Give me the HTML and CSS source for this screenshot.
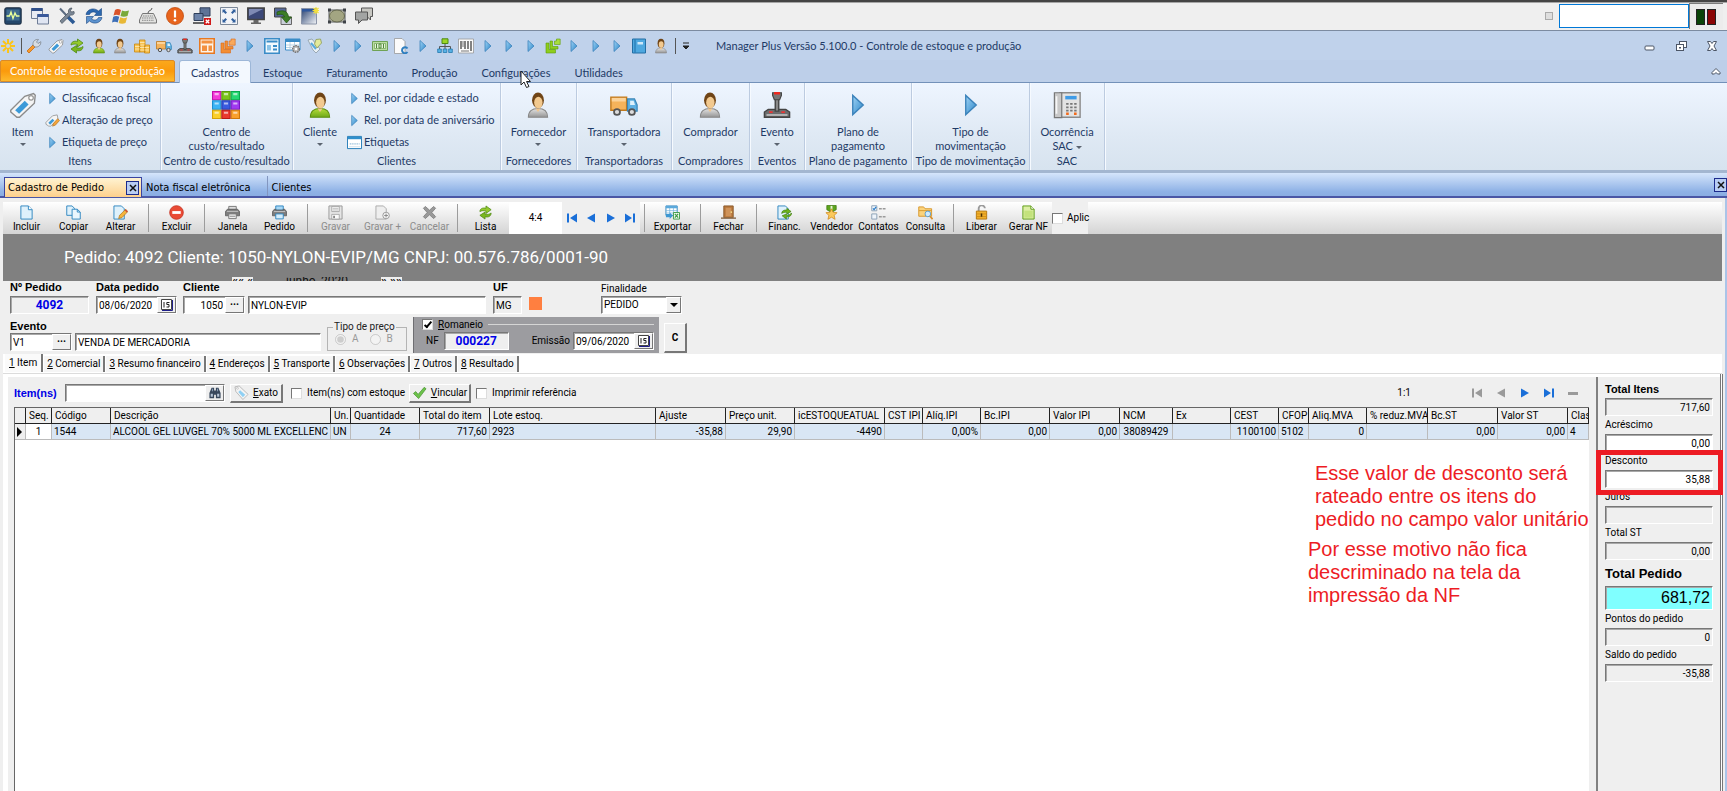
FILE: index.html
```
<!DOCTYPE html>
<html lang="pt-BR">
<head>
<meta charset="utf-8">
<title>Manager Plus - Controle de estoque e produção</title>
<link rel="stylesheet" href="styles.css">
</head>
<body>
<svg class="defs" aria-hidden="true">
  <defs>
    <linearGradient id="gBlue" x1="0" y1="0" x2="1" y2="1"><stop offset="0" stop-color="#9fd3f5"/><stop offset="1" stop-color="#2b86c8"/></linearGradient>
    <linearGradient id="gGray" x1="0" y1="0" x2="0" y2="1"><stop offset="0" stop-color="#e4e4e4"/><stop offset="1" stop-color="#949494"/></linearGradient>
    <linearGradient id="gGreen" x1="0" y1="0" x2="0" y2="1"><stop offset="0" stop-color="#b4dd3a"/><stop offset="1" stop-color="#6fa818"/></linearGradient>
    <linearGradient id="gScr" x1="0" y1="0" x2="1" y2="1"><stop offset="0" stop-color="#27406f"/><stop offset="1" stop-color="#f4f6f9"/></linearGradient>
  </defs>
  <symbol id="arrow" viewBox="0 0 16 16"><path d="M5 2.500V13.500L11 8Z" fill="url(#gBlue)" stroke="#3c83bb" stroke-width=".8"/></symbol>
  <symbol id="tag" viewBox="0 0 16 16"><path d="M1 11 9 3 14 1.500 15 2.500 14.500 7 6 15 4.500 15 1 12Z" fill="#f5f5f5" stroke="#8b8b8b" stroke-width=".8"/><path d="M3.500 11 9 5.500 11.200 7.700 5.800 13Z" fill="#3d9ad8"/><circle cx="12.600" cy="3.900" r="1.300" fill="#fff" stroke="#999" stroke-width=".7"/></symbol>
  <symbol id="tagedit" viewBox="0 0 16 16"><path d="M1 10 8 3 13 2 14 7 6 14 4 14 1 12Z" fill="#f5f5f5" stroke="#8b8b8b" stroke-width=".8"/><path d="M3.500 10.500 8 6 10 8 5.500 12.500Z" fill="#3d9ad8"/><path d="M8 14 9 11 13.500 6 15.500 8 11 13Z" fill="#f3a43a" stroke="#a76b1a" stroke-width=".6"/></symbol>
  <symbol id="tags" viewBox="0 0 16 16"><path d="M1 2 5 1 13 11 9 15 6 12Z" fill="#e9f0f4" stroke="#8a9aa5" stroke-width=".8"/><path d="M4 5 9 11" stroke="#58a9de" stroke-width="2"/><path d="M9 1.500 13.500 1 14.500 5 10 10 7.500 6Z" fill="#e3ea9a" stroke="#8a9a55" stroke-width=".8"/></symbol>
  <symbol id="personG" viewBox="0 0 16 16"><path d="M2.500 15C2.500 11.500 4.500 10 8 10S13.500 11.500 13.500 15Z" fill="url(#gGreen)" stroke="#5e8f12" stroke-width=".6"/><path d="M6.500 10 8 12 9.500 10Z" fill="#f0c58e"/><ellipse cx="8" cy="5.300" rx="3.400" ry="4.500" fill="#6f4416"/><ellipse cx="8.200" cy="6.600" rx="2.400" ry="3.300" fill="#f2c98f"/></symbol>
  <symbol id="personA" viewBox="0 0 16 16"><path d="M2.500 15C2.500 11.500 4.500 10 8 10S13.500 11.500 13.500 15Z" fill="url(#gGray)" stroke="#888" stroke-width=".6"/><path d="M6.500 10 8 12 9.500 10Z" fill="#f0c58e"/><ellipse cx="8" cy="5.300" rx="3.400" ry="4.500" fill="#6f4416"/><ellipse cx="8.200" cy="6.600" rx="2.400" ry="3.300" fill="#f2c98f"/></symbol>
  <symbol id="truck" viewBox="0 0 16 16"><path d="M.5 3.500H9.500V11H.5Z" fill="#f5b35b" stroke="#c17a1d" stroke-width=".8"/><path d="M1 4H9V6H1Z" fill="#fbd39a"/><path d="M10 4.500H14L15.500 8V11.500H10Z" fill="#5eb0e2" stroke="#3a86b8" stroke-width=".7"/><path d="M11.500 5.500H13.500L14.300 8H11.500Z" fill="#dff1fb"/><circle cx="4" cy="12" r="1.700" fill="#ddd" stroke="#555"/><circle cx="12.500" cy="12" r="1.700" fill="#ddd" stroke="#555"/></symbol>
  <symbol id="joy" viewBox="0 0 16 16"><path d="M.8 15V12L3 10.500H13L15.200 12V15Z" fill="#6d6d6d" stroke="#444" stroke-width=".8"/><path d="M7 4H9V11.500H7Z" fill="#888" stroke="#444" stroke-width=".8"/><path d="M5.500 1H10.500V2.500L9.500 5H6.500L5.500 2.500Z" fill="#777" stroke="#444" stroke-width=".7"/><path d="M6.300.6H9.700V2H6.300Z" fill="#f0281e"/><path d="M3.500 11.500H5.500V12.500H3.500ZM10.500 11.500H12.500V12.500H10.500Z" fill="#e33"/><path d="M2 13.700H14" stroke="#bbb"/></symbol>
  <symbol id="grid9" viewBox="0 0 27 27"><g stroke-width="1"><path d="M.5.5H8.500V8.500H.5Z" fill="#f23ad9" stroke="#c111a8"/><path d="M9.500.5H17.500V8.500H9.500Z" fill="#7bc51a" stroke="#5a9a0c"/><path d="M18.500.5H26.500V8.500H18.500Z" fill="#26d873" stroke="#0aa94e"/><path d="M.5 9.500H8.500V17.500H.5Z" fill="#3cb4f6" stroke="#1b8fd0"/><path d="M9.500 9.500H17.500V17.500H9.500Z" fill="#3a5be0" stroke="#2038ad"/><path d="M18.500 9.500H26.500V17.500H18.500Z" fill="#a03af0" stroke="#7a15c5"/><path d="M.5 18.500H8.500V26.500H.5Z" fill="#fbd02a" stroke="#d4a30a"/><path d="M9.500 18.500H17.500V26.500H9.500Z" fill="#ea3a2e" stroke="#b81a12"/><path d="M18.500 18.500H26.500V26.500H18.500Z" fill="#faa02c" stroke="#d0780a"/></g><path d="M2.500 3H6.500M11.500 3H15.500M20.500 3H24.500M2.500 12H6.500M11.500 12H15.500M20.500 12H24.500M2.500 21H6.500M11.500 21H15.500M20.500 21H24.500" stroke="#fff" stroke-opacity=".6" stroke-width="2"/></symbol>
  <symbol id="label" viewBox="0 0 16 16"><path d="M.5 1.500H15.500V14.500H.5Z" fill="#fff" stroke="#1d79b5"/><path d="M1 2H15V4.500H1Z" fill="#2f8fcc"/><path d="M3 9.500H13.500" stroke="#4a90c0" stroke-dasharray="1 1"/><path d="M2 12.500H14" stroke="#cfe0ec"/></symbol>
  <symbol id="phone" viewBox="0 0 16 16"><path d="M4 1H15.500V15H4Z" fill="#e3e3e3" stroke="#8b8b8b" stroke-width=".8"/><path d="M.8 1H5V15.200H.8Z" fill="#c8c8c8" stroke="#777" stroke-width=".7"/><path d="M2 3V13" stroke="#f6f6f6"/><path d="M7 2.800H13.500V4.800H7Z" fill="#3f9be6"/><path d="M7.500 7.300H13.500M7.500 9.300H13.500M7.500 11.200H13.500" stroke="#777" stroke-width="1" stroke-dasharray="1.400 .9"/><path d="M7.500 13H9M12 13H13.500" stroke="#f26a1b" stroke-width="1.300"/></symbol>
  <symbol id="star" viewBox="0 0 16 16"><path d="M8 1V15M1 8H15M3 3 13 13M13 3 3 13" stroke="#fbc418" stroke-width="2"/><circle cx="8" cy="8" r="2" fill="#c3d4ec"/></symbol>
  <symbol id="wrench" viewBox="0 0 16 16"><path d="M1 13 7 7 9 9 3 15Z" fill="#f79a2c" stroke="#c86a10" stroke-width=".8"/><path d="M7 7C6.500 3.500 9 1 12.500 1.500L10.500 4 12 5.500 14.800 3.700C15.200 7 12.500 9.500 9 9Z" fill="#d7dce2" stroke="#7c858f" stroke-width=".8"/></symbol>
  <symbol id="recycle" viewBox="0 0 16 16"><path d="M2 7C2 4 5 2.500 8.500 3.500V1L14 5 8.500 9V6.500C6 5.700 4 6 2 7Z" fill="#94c92d" stroke="#4f8a12" stroke-width=".8"/><path d="M14 8.500C14 12 11 13.500 7.500 12.500V15L2 11 7.500 7.500V9.700C10 10.500 12 10 14 8.500Z" fill="#7ab71e" stroke="#4f8a12" stroke-width=".8"/></symbol>
  <symbol id="coins" viewBox="0 0 16 16"><path d="M.5 6H6V14H.5ZM5.500 2H11V14H5.500ZM10.500 7H15.500V15H10.500Z" fill="#f9c34f" stroke="#c8860f" stroke-width=".8"/><path d="M1 8.500H5.500M1 11H5.500M6 4.500H10.500M6 7H10.500M6 9.500H10.500M6 12H10.500M11 9.500H15M11 12H15" stroke="#fbe7b2" stroke-width=".9"/></symbol>
  <symbol id="winO" viewBox="0 0 16 16"><path d="M.8.800H15.200V15.200H.8Z" fill="#fdf3e7" stroke="#e87820" stroke-width="1.600"/><path d="M2.500 2.500H13.500V5.500H2.500ZM3 7.500H8V13H3ZM9.500 7.500H13V13H9.500Z" fill="#f39140"/></symbol>
  <symbol id="winB" viewBox="0 0 16 16"><path d="M.8.800H15.200V15.200H.8Z" fill="#f3f9fd" stroke="#3a8cc7" stroke-width="1.600"/><path d="M2.500 2.500H13.500V4.500H2.500Z" fill="#3a8cc7"/><path d="M3 7H7V12.500H3Z" fill="#8cc4e8"/><path d="M9 7H13V9H9ZM9 10.500H13V12.500H9Z" fill="#3a8cc7"/></symbol>
  <symbol id="layO" viewBox="0 0 16 16"><path d="M1 5H4V11.500H10.500V15H1Z" fill="#f38e34" stroke="#d7691a" stroke-width=".6"/><path d="M5 3H7.500V8.500H13V11H5Z" fill="#f38e34" stroke="#d7691a" stroke-width=".6"/><path d="M9 3H11V1H15.200V7.200H9Z" fill="#f9a95c" stroke="#d7691a" stroke-width=".6"/></symbol>
  <symbol id="layG" viewBox="0 0 16 16"><path d="M1 5H4V11.500H10.500V15H1Z" fill="#8fce1c" stroke="#5d9a0a" stroke-width=".6"/><path d="M5 3H7.500V8.500H13V11H5Z" fill="#8fce1c" stroke="#5d9a0a" stroke-width=".6"/><path d="M9.500 3H11.500V1H15.200V6.500H9.500Z" fill="#a8dd3c" stroke="#5d9a0a" stroke-width=".6"/></symbol>
  <symbol id="tgear" viewBox="0 0 16 16"><path d="M.5 1H15V12H.5Z" fill="#fff" stroke="#3a8cc7"/><path d="M.5 1H15V4H.5Z" fill="#3a8cc7"/><path d="M1 7H14M1 9.500H14M5 4V12M9.500 4V12" stroke="#a7c9e0" stroke-width=".8"/><circle cx="11" cy="11" r="3.300" fill="#bbb" stroke="#777" stroke-width="1.500" stroke-dasharray="1.600 .8"/><circle cx="11" cy="11" r="1.200" fill="#fff"/></symbol>
  <symbol id="money" viewBox="0 0 16 16"><path d="M.5 3.500H15.500V12.500H.5Z" fill="#b9dca0" stroke="#6fa255"/><path d="M2.500 5.500H13.500V10.500H2.500Z" fill="#e5f3d9" stroke="#6fa255" stroke-width=".7"/><path d="M4.500 6V10M7 6V10H9V6ZM11.500 6V10" fill="none" stroke="#4d8a35"/></symbol>
  <symbol id="docC" viewBox="0 0 16 16"><path d="M1.500.5H9L12 3.500V15.500H1.500Z" fill="#fbfbfb" stroke="#999" stroke-width=".8"/><path d="M14.500 10.500A3 3 0 1 0 14.500 14" fill="none" stroke="#2f7fc0" stroke-width="2"/></symbol>
  <symbol id="net" viewBox="0 0 16 16"><path d="M5 .8H11V5.500H5Z" fill="#9bd526" stroke="#4d8a10"/><path d="M8 6V9M2.500 11V8.500H13.500V11M8 8V11" stroke="#555" fill="none"/><path d="M.7 11H4.300V14.500H.7ZM6.200 11H9.800V14.500H6.200ZM11.700 11H15.300V14.500H11.700Z" fill="#58b2e6" stroke="#2378ad" stroke-width=".8"/></symbol>
  <symbol id="bar" viewBox="0 0 16 16"><path d="M.5 1H15.500V15H.5Z" fill="#fbfbfb" stroke="#999" stroke-width=".8"/><path d="M3 3V11M7 3V11M10 3V11M13 3V13" stroke="#333" stroke-width="1.200"/><path d="M5 3V9M3 13H11" stroke="#555" stroke-width=".8"/></symbol>
  <symbol id="book" viewBox="0 0 16 16"><path d="M1.500 1H14.500V15H1.500Z" fill="#4ea8df" stroke="#236fa5"/><path d="M4 1V15" stroke="#2b7fb8" stroke-width="1.400"/><path d="M6.500 4H12V6.500H6.500Z" fill="#cfe8f8"/></symbol>

  <symbol id="s1" viewBox="0 0 18 18"><rect x=".8" y=".8" width="16.400" height="16.400" rx="1.500" fill="#24476b" stroke="#1b2a3d"/><rect x="2.500" y="2.500" width="13" height="11" fill="#3f6c8f"/><path d="M2.500 9H5.500L7 5 9 11.500 11 6 12.500 9H15.500" fill="none" stroke="#eaff9a" stroke-width="1.300"/></symbol>
  <symbol id="s2" viewBox="0 0 18 18"><path d="M.5 1.500H11.500V11.500H.5Z" fill="#e8ebf2" stroke="#6f7d96"/><path d="M.5 1H11.500V4H.5Z" fill="#2f4f8a"/><path d="M6.500 7.500H17.500V17H6.500Z" fill="#dfe5f2" stroke="#6f7d96"/><path d="M6.500 7H17.500V10H6.500Z" fill="#39599a"/></symbol>
  <symbol id="s3" viewBox="0 0 18 18"><path d="M2 1.500 9 9" stroke="#5b6b80" stroke-width="2"/><path d="M9 9 16 16" stroke="#2c5a94" stroke-width="3.500"/><path d="M16 4.500 13.500 5 12.500 3.500 14 1C11 1 10 3 10.500 5.500L2 14 4 16.500 12.500 8C15 8.500 17 7 16 4.500Z" fill="#7b8795" stroke="#46505c" stroke-width=".7"/></symbol>
  <symbol id="s4" viewBox="0 0 18 18"><path d="M1 7.500C2 2 9 0 13.500 4L16.500 1.500V8.500H9.500L11.500 6C8.500 4 5.500 5 4.500 7.500Z" fill="#2b67ae" stroke="#174580" stroke-width=".6"/><path d="M17 10.500C16 16 9 18 4.500 14L1.500 16.500V9.500H8.500L6.500 12C9.500 14 12.500 13 13.500 10.500Z" fill="#5d93cf" stroke="#174580" stroke-width=".6"/></symbol>
  <symbol id="s5" viewBox="0 0 18 18"><path d="M3 3C5 1.500 7 2 9 3L7.500 8.500C5.500 7.500 3.500 7.500 1.500 8.500Z" fill="#d9532a"/><path d="M10 3.500C12 4.500 14 4.500 17 3.500L15.500 9C13 10 10.500 10 8.500 9Z" fill="#79a93a"/><path d="M1.200 9.800C3.200 8.800 5.200 8.800 7.200 9.800L5.700 15.500C3.700 14.500 2 14.500 0 15.500Z" fill="#3d6fb8"/><path d="M8.200 10.300C10.200 11.300 12.500 11.500 15.200 10.300L13.500 16C11.500 17 8.800 17 6.700 16Z" fill="#e8b836"/></symbol>
  <symbol id="s6" viewBox="0 0 18 18"><path d="M9 6C9 3 13 4 13 1" fill="none" stroke="#555"/><path d="M3.500 6.500H14.500L17.500 13V16H.5V13Z" fill="#e2e2e0" stroke="#777"/><path d="M4 9H14M3 11H15M3 13.300H15" stroke="#888" stroke-dasharray="1.500 .8"/></symbol>
  <symbol id="s7" viewBox="0 0 18 18"><circle cx="9" cy="9" r="8.500" fill="#e8641c" stroke="#c14a0c" stroke-width=".8"/><path d="M9 3.500V10.500" stroke="#fff" stroke-width="2.200"/><circle cx="9" cy="13.200" r="1.300" fill="#fff"/></symbol>
  <symbol id="s8" viewBox="0 0 18 18"><path d="M7 .8H17V9H7Z" fill="#5d7397" stroke="#2f3f5a"/><path d="M1 6.500H10V13.500H1Z" fill="#6d84aa" stroke="#2f3f5a"/><path d="M0 16H11" stroke="#666" stroke-width="2"/><path d="M11 11H18V18H11Z" fill="#d01a1a"/><path d="M12.800 12.800 16.200 16.200M16.200 12.800 12.800 16.200" stroke="#fff" stroke-width="1.400"/></symbol>
  <symbol id="s9" viewBox="0 0 18 18"><path d="M.5.500H17.500V17.500H.5Z" fill="#f1f3f7" stroke="#7b8797"/><path d="M2.500 2.500H6L5 3.500 7 5.500 5.500 7 3.500 5 2.500 6ZM15.500 2.500V6L14.500 5 12.500 7 11 5.500 13 3.500 12 2.500ZM2.500 15.500V12L3.500 13 5.500 11 7 12.500 5 14.500 6 15.500ZM15.500 15.500H12L13 14.500 11 12.500 12.500 11 14.500 13 15.500 12Z" fill="#33619e"/></symbol>
  <symbol id="s10" viewBox="0 0 18 18"><path d="M.8 1H17.200V12.500H.8Z" fill="#3c4878" stroke="#444" stroke-width="1.500"/><path d="M2 2H16L2 9Z" fill="#7f8ab4"/><path d="M6.500 13H11.500V15.500H14V17H4V15.500H6.500Z" fill="#666"/></symbol>
  <symbol id="s11" viewBox="0 0 18 18"><path d="M.5 1H12V10H.5Z" fill="#56699a" stroke="#444"/><path d="M7 10H17.500V17.500H7Z" fill="#c9ced9" stroke="#666"/><path d="M3 5C9 2.500 14 4 14.500 10H17.500L12.500 16 7.500 10H10.500C10 7.500 7 6.500 3 8Z" fill="#3d7d26" stroke="#225310" stroke-width=".7"/></symbol>
  <symbol id="s12" viewBox="0 0 18 18"><path d="M.5 1.500H15.500V17H.5Z" fill="url(#gScr)" stroke="#8a94a8"/><path d="M1 2H15V4.500H1Z" fill="#2d569c"/><path d="M15 0V7M11.500 3.500H18M12.500 1 17.500 6M17.500 1 12.500 6" stroke="#f4e03a" stroke-width="1.200"/></symbol>
  <symbol id="s13" viewBox="0 0 18 18"><path d="M1 3H17V15H1Z" fill="#cdcdbd" stroke="#55585c"/><ellipse cx="9" cy="9" rx="7.500" ry="6" fill="#a3a582" stroke="#55583f" stroke-width=".8"/><path d="M0 1.500H3V4.500H0ZM15 1.500H18V4.500H15ZM0 13.500H3V16.500H0ZM15 13.500H18V16.500H15Z" fill="#3f4348"/></symbol>
  <symbol id="s14" viewBox="0 0 18 18"><path d="M6.500 1H17.500V9.500H15.500V13L12 9.500H6.500Z" fill="#c7c7c2" stroke="#555"/><path d="M.5 5H12.500V13H7L3.500 16.500V13H.5Z" fill="#a2a4a3" stroke="#555"/></symbol>

  <symbol id="doc" viewBox="0 0 16 16"><path d="M2 1H10L14 5V15H2Z" fill="#dff1fb" stroke="#2f86c0"/><path d="M10 1V5H14" fill="#fff" stroke="#2f86c0"/></symbol>
  <symbol id="docs" viewBox="0 0 16 16"><path d="M.8 1H6.500L9 3.500V11H.8Z" fill="#dff1fb" stroke="#2f86c0"/><path d="M6.500 4.500H12L15.200 7.500V15H6.500Z" fill="#eaf6fd" stroke="#2f86c0"/><path d="M12 4.500V7.500H15" fill="none" stroke="#2f86c0"/></symbol>
  <symbol id="docedit" viewBox="0 0 16 16"><path d="M1 1H9L12 4V15H1Z" fill="#dff1fb" stroke="#2f86c0"/><path d="M6 14.500 7 11 13.500 4.500 15.800 7 9.500 13.500Z" fill="#f6b43c" stroke="#a8701a" stroke-width=".7"/><path d="M13.500 4.500 15.800 7 14.700 8 12.500 5.500Z" fill="#d04a3a"/></symbol>
  <symbol id="no" viewBox="0 0 16 16"><circle cx="8" cy="8" r="7.300" fill="#e94b35" stroke="#c22a1a" stroke-width=".8"/><path d="M3.500 6.500H12.500V9.500H3.500Z" fill="#fff"/></symbol>
  <symbol id="print" viewBox="0 0 16 16"><path d="M4 1.500H12V5H4Z" fill="#ddd" stroke="#777"/><path d="M2.500 4.500H13.500L15.500 7V11.500H.5V7Z" fill="#7d7d7d" stroke="#555" stroke-width=".8"/><path d="M2 6.800H14" stroke="#c5c5c5"/><path d="M4 9.500H12V14.500H4Z" fill="#eee" stroke="#777"/><path d="M5 12H11" stroke="#888"/></symbol>
  <symbol id="printB" viewBox="0 0 16 16"><path d="M4 1H12V5.500H4Z" fill="#a8d8f6" stroke="#2f86c0"/><path d="M2.500 4.500H4V5.500H12V4.500H13.500L15.500 7V11.500H.5V7Z" fill="#7d7d7d" stroke="#555" stroke-width=".8"/><path d="M2 7H14" stroke="#c5c5c5"/><path d="M4 9.500H12V14.800H4Z" fill="#d5edfb" stroke="#2f86c0"/></symbol>
  <symbol id="floppy" viewBox="0 0 16 16"><path d="M1 1H15V15H1Z" fill="#e5e5e5" stroke="#999"/><path d="M4 1.500H12V7H4ZM4 10H12V15H4Z" fill="#fafafa" stroke="#999" stroke-width=".8"/><path d="M5 3.500H11M5 5.300H11" stroke="#aaa" stroke-width=".8"/><path d="M5.500 11.500H7.500V14H5.500Z" fill="#888"/></symbol>
  <symbol id="docplus" viewBox="0 0 16 16"><path d="M1 1H9L12 4V15H1Z" fill="#eee" stroke="#aaa"/><circle cx="11.800" cy="11.200" r="3.500" fill="#f4f4f4" stroke="#999"/><path d="M11.800 9.200V13.200M9.800 11.200H13.800" stroke="#888"/></symbol>
  <symbol id="x" viewBox="0 0 16 16"><path d="M3.500 1.500 8 5.500 12.500 1.500 14.500 3.500 10.500 8 14.500 12.500 12.500 14.500 8 10.500 3.500 14.500 1.500 12.500 5.500 8 1.500 3.500Z" fill="#999" stroke="#777" stroke-width=".8"/></symbol>
  <symbol id="nfirst" viewBox="0 0 12 12"><path d="M1 1.500H3V10.500H1ZM11 1.500V10.500L4 6Z"/></symbol>
  <symbol id="nprev" viewBox="0 0 12 12"><path d="M10 1.500V10.500L2 6Z"/></symbol>
  <symbol id="nnext" viewBox="0 0 12 12"><path d="M2 1.500V10.500L10 6Z"/></symbol>
  <symbol id="nlast" viewBox="0 0 12 12"><path d="M1 1.500V10.500L8 6ZM9 1.500H11V10.500H9Z"/></symbol>
  <symbol id="export" viewBox="0 0 16 16"><path d="M1 1H13V11H1Z" fill="#fff" stroke="#2f86c0"/><path d="M1 1H13V3.500H1Z" fill="#5aa9dc"/><path d="M1 6H13M1 8.500H13M5 3V11M9 3V11" stroke="#79b6dd" stroke-width=".8"/><path d="M1 9.500H5V8L8.500 11.500 5 15V13H1Z" fill="#3d97d2"/><path d="M9 8H15.500V15H9Z" fill="#f2faef" stroke="#3c9a44"/><path d="M10.500 9.500 14 13.500M14 9.500 10.500 13.500" stroke="#3c9a44" stroke-width="1.300"/></symbol>
  <symbol id="door" viewBox="0 0 16 16"><path d="M3 1H13V13.500H3Z" fill="#b9783c" stroke="#8a5a2c"/><path d="M5 3H11V12H5Z" fill="#cf935a"/><circle cx="11" cy="7.500" r=".9" fill="#f8e08a"/><path d="M0 14H16" stroke="#8a6a4c" stroke-width="1.500"/></symbol>
  <symbol id="docrec" viewBox="0 0 16 16"><path d="M1 1H9L12 4V15H1Z" fill="#dff1fb" stroke="#2f86c0"/><path d="M5 9C5 6 8 5 10.500 5.500V3.500L15 7 10.500 9.500V8C8.500 7.500 6.500 8 5 9ZM15.500 8.500C15.500 12 12.500 13 10 12.500V15L5.500 11.500 10 9.500V10.800C12 11 14 10.500 15.500 8.500Z" fill="#6db51c" stroke="#3c7a0c" stroke-width=".7"/></symbol>
  <symbol id="medal" viewBox="0 0 16 16"><path d="M3 .5H13V5L8 8 3 5Z" fill="#5ea51e" stroke="#3f7a10" stroke-width=".8"/><path d="M7 1H9V5H7Z" fill="#e8f4d8"/><path d="M8 4 9.700 7.800 14 8.200 10.800 11 11.800 15.300 8 13 4.200 15.300 5.200 11 2 8.200 6.300 7.800Z" fill="#fbc95c" stroke="#d08a1c" stroke-width=".8"/></symbol>
  <symbol id="checks" viewBox="0 0 16 16"><path d="M.8.800H6.200V6.200H.8ZM.8 9.500H6.200V15H.8Z" fill="#eef4fa" stroke="#8aa0b5"/><path d="M2 3.500 3.300 5 5.500 2" fill="none" stroke="#2378c8" stroke-width="1.200"/><path d="M8.500 4H16M8.500 12.500H16" stroke="#9a9a9a" stroke-width="1.500" stroke-dasharray="3 1"/></symbol>
  <symbol id="fsearch" viewBox="0 0 16 16"><path d="M.8 2H6L7.500 4H14.500V12H.8Z" fill="#fbd37c" stroke="#d8982c"/><path d="M1 6H14.500" stroke="#d8982c"/><circle cx="10.500" cy="9.500" r="3" fill="#cfeafc" stroke="#5a9ccc"/><path d="M12.800 12 15.500 15" stroke="#d8902c" stroke-width="1.800"/></symbol>
  <symbol id="lock" viewBox="0 0 16 16"><path d="M5 7V4A3.300 3.300 0 0 1 11.600 3.500" fill="none" stroke="#9a9a9a" stroke-width="2"/><path d="M2.500 6.500H13.500V15H2.500Z" fill="#f0b02c" stroke="#b5760c"/><path d="M3 9.500H13M3 12.300H13" stroke="#d48f14"/><path d="M7.200 9H8.800V12.500H7.200Z" fill="#4c3206"/></symbol>
  <symbol id="docG" viewBox="0 0 16 16"><path d="M2 1H10.500L14 4.500V15H2Z" fill="#dcefa5" stroke="#5c9c12"/><path d="M3.500 6V13.500H12.500V6" fill="#c3e27c"/><path d="M10.500 1V4.500H14" fill="#fff" stroke="#5c9c12"/></symbol>
  <symbol id="bino" viewBox="0 0 14 14"><path d="M3 1H6V4H8V1H11L13.500 7V13H8V9H6V13H.5V7Z" fill="#37475c"/><path d="M2 8H4.500V11.500H2ZM9.500 8H12V11.500H9.500Z" fill="#b5c4d6"/><path d="M4 2V5M10 2V5" stroke="#9db0c8"/></symbol>
  <symbol id="tagL" viewBox="0 0 16 16"><path d="M1 2 5.500 1 15 10 9.500 15.500 2 7Z" fill="#f4f4f4" stroke="#aaa" stroke-width=".8"/><path d="M6.500 5.500 12 10.500 9.500 13 4.500 7.500Z" fill="#8fd0f4"/><circle cx="3.700" cy="3.500" r="1" fill="#fff" stroke="#aaa" stroke-width=".6"/></symbol>
  <symbol id="check" viewBox="0 0 16 16"><path d="M1.500 9 4 7 6.500 10 13 2.500 15 4 7 14.500Z" fill="#6cc24a" stroke="#3f8c28" stroke-width=".7"/></symbol>
  <symbol id="cal" viewBox="0 0 12 12"><path d="M.5.500H10.500V10.500H.5Z" fill="#fff" stroke="#444"/><path d="M11.500 1V11.500H1" fill="none" stroke="#20208a"/><path d="M3 3V8.500M8.500 3.500H5.800V5.500H8V8H5.500" fill="none" stroke="#222"/></symbol>
</svg>

<header class="strip">
  <div class="strip-icons">
    <svg><use href="#s1"/></svg><svg><use href="#s2"/></svg><svg><use href="#s3"/></svg><svg><use href="#s4"/></svg><svg><use href="#s5"/></svg><svg><use href="#s6"/></svg><svg><use href="#s7"/></svg><svg><use href="#s8"/></svg><svg><use href="#s9"/></svg><svg><use href="#s10"/></svg><svg><use href="#s11"/></svg><svg><use href="#s12"/></svg><svg><use href="#s13"/></svg><svg><use href="#s14"/></svg>
  </div>
  <input class="strip-check" type="checkbox" aria-label="Fixar" disabled>
  <input class="strip-input" type="text" aria-label="Sessão">
  <div class="leds"><span class="led green"></span><span class="led red"></span></div>
</header>

<div class="quick">
  <svg class="q"><use href="#star"/></svg>
  <span class="vline"></span>
  <div class="quick-icons">
    <svg><use href="#wrench"/></svg><svg><use href="#tag"/></svg><svg><use href="#recycle"/></svg><svg><use href="#personG"/></svg><svg><use href="#personA"/></svg><svg><use href="#coins"/></svg><svg><use href="#truck"/></svg><svg><use href="#joy"/></svg><svg><use href="#winO"/></svg><svg><use href="#layO"/></svg><svg><use href="#arrow"/></svg><svg><use href="#winB"/></svg><svg><use href="#tgear"/></svg><svg><use href="#tags"/></svg><svg><use href="#arrow"/></svg><svg><use href="#arrow"/></svg><svg><use href="#money"/></svg><svg><use href="#docC"/></svg><svg><use href="#arrow"/></svg><svg><use href="#net"/></svg><svg><use href="#bar"/></svg><svg><use href="#arrow"/></svg><svg><use href="#arrow"/></svg><svg><use href="#arrow"/></svg><svg><use href="#layG"/></svg><svg><use href="#arrow"/></svg><svg><use href="#arrow"/></svg><svg><use href="#arrow"/></svg><svg><use href="#book"/></svg><svg><use href="#personA"/></svg>
  </div>
  <span class="vline end"></span>
  <svg class="q-more" viewBox="0 0 8 8"><path d="M1 1H7M1 4H7L4 7Z" stroke="#222" fill="#222"/></svg>
  <div class="app-title">Manager Plus Versão 5.100.0 - Controle de estoque e produção</div>
  <div class="win-controls">
    <button aria-label="Minimizar"><svg viewBox="0 0 12 12"><rect x="1" y="6" width="9" height="4" rx="1" fill="#fff" stroke="#4c5666"/></svg></button>
    <button aria-label="Restaurar"><svg viewBox="0 0 12 12"><rect x="4.500" y="1.500" width="7" height="6" fill="#fff" stroke="#4c5666"/><rect x="1.500" y="4.500" width="7" height="6" fill="#fff" stroke="#4c5666"/><rect x="4" y="7" width="2" height="1.500" fill="#4c5666"/></svg></button>
    <button aria-label="Fechar"><svg viewBox="0 0 12 12"><path d="M1.500 1.500H4.500L6 3.500 7.500 1.500H10.500L8 6 10.500 10.500H7.500L6 8.500 4.500 10.500H1.500L4 6Z" fill="#fff" stroke="#4c5666"/></svg></button>
  </div>
</div>

<nav class="ribbon-tabs">
  <button class="app-tab">Controle de estoque e produção</button>
  <button class="rtab active">Cadastros</button><button class="rtab">Estoque</button><button class="rtab">Faturamento</button><button class="rtab">Produção</button><button class="rtab">Configurações</button><button class="rtab">Utilidades</button>
  <button class="collapse" aria-label="Recolher"><svg viewBox="0 0 10 8"><path d="M1 5.500 5 1.500 9 5.500V7H6.500L5 5.500 3.500 7H1Z" fill="#fff" stroke="#4c5666"/></svg></button>
  <svg class="cursor" viewBox="0 0 12 19"><path d="M1 1V15L4 12 6.500 17.500 9 16.500 6.500 11.500H10.500Z" fill="#fff" stroke="#222"/></svg>
</nav>

<section class="ribbon">
  <div class="group g1">
    <div class="gbody">
      <button class="big narrow"><svg><use href="#tag"/></svg><span>Item</span><i class="dd"></i></button>
      <div class="smalls">
        <button><svg><use href="#arrow"/></svg>Classificacao fiscal</button>
        <button><svg><use href="#tagedit"/></svg>Alteração de preço</button>
        <button><svg><use href="#arrow"/></svg>Etiqueta de preço</button>
      </div>
    </div>
    <div class="cap">Itens</div>
  </div>
  <div class="group g2"><div class="gbody"><button class="big"><svg><use href="#grid9"/></svg><span>Centro de<br>custo/resultado</span></button></div><div class="cap">Centro de custo/resultado</div></div>
  <div class="group g3">
    <div class="gbody">
      <button class="big mid"><svg><use href="#personG"/></svg><span>Cliente</span><i class="dd"></i></button>
      <div class="smalls">
        <button><svg><use href="#arrow"/></svg>Rel. por cidade e estado</button>
        <button><svg><use href="#arrow"/></svg>Rel. por data de aniversário</button>
        <button><svg><use href="#label"/></svg>Etiquetas</button>
      </div>
    </div>
    <div class="cap">Clientes</div>
  </div>
  <div class="group g4"><div class="gbody"><button class="big"><svg><use href="#personA"/></svg><span>Fornecedor</span><i class="dd"></i></button></div><div class="cap">Fornecedores</div></div>
  <div class="group g5"><div class="gbody"><button class="big"><svg><use href="#truck"/></svg><span>Transportadora</span><i class="dd"></i></button></div><div class="cap">Transportadoras</div></div>
  <div class="group g6"><div class="gbody"><button class="big"><svg><use href="#personA"/></svg><span>Comprador</span></button></div><div class="cap">Compradores</div></div>
  <div class="group g7"><div class="gbody"><button class="big"><svg><use href="#joy"/></svg><span>Evento</span><i class="dd"></i></button></div><div class="cap">Eventos</div></div>
  <div class="group g8"><div class="gbody"><button class="big"><svg><use href="#arrow"/></svg><span>Plano de<br>pagamento</span></button></div><div class="cap">Plano de pagamento</div></div>
  <div class="group g9"><div class="gbody"><button class="big"><svg><use href="#arrow"/></svg><span>Tipo de<br>movimentação</span></button></div><div class="cap">Tipo de movimentação</div></div>
  <div class="group g10"><div class="gbody"><button class="big"><svg><use href="#phone"/></svg><span>Ocorrência<br>SAC <i class="dd in"></i></span></button></div><div class="cap">SAC</div></div>
</section>

<nav class="doc-tabs">
  <div class="dtab active"><span>Cadastro de Pedido</span><button class="xbtn" aria-label="Fechar aba"><svg viewBox="0 0 8 8"><path d="M1 1 7 7M7 1 1 7" stroke="#111" stroke-width="1.500"/></svg></button></div>
  <button class="dtab nf">Nota fiscal eletrônica</button>
  <button class="dtab">Clientes</button>
  <button class="xbtn last" aria-label="Fechar"><svg viewBox="0 0 8 8"><path d="M1 1 7 7M7 1 1 7" stroke="#111" stroke-width="1.500"/></svg></button>
</nav>

<main class="window">
  <div class="toolbar">
    <button><svg><use href="#doc"/></svg>Incluir</button><button><svg><use href="#docs"/></svg>Copiar</button><button><svg><use href="#docedit"/></svg>Alterar</button><span class="sep"></span>
    <button><svg><use href="#no"/></svg>Excluir</button><span class="sep"></span>
    <button><svg><use href="#print"/></svg>Janela</button><button><svg><use href="#printB"/></svg>Pedido</button><span class="sep"></span>
    <button disabled><svg><use href="#floppy"/></svg>Gravar</button><button disabled><svg><use href="#docplus"/></svg>Gravar +</button><button disabled><svg><use href="#x"/></svg>Cancelar</button><span class="sep"></span>
    <button><svg><use href="#recycle"/></svg>Lista</button>
    <div class="counter">4:4</div>
    <div class="navs">
      <a href="#" aria-label="Primeiro"><svg><use href="#nfirst"/></svg></a><a href="#" aria-label="Anterior"><svg><use href="#nprev"/></svg></a><a href="#" aria-label="Próximo"><svg><use href="#nnext"/></svg></a><a href="#" aria-label="Último"><svg><use href="#nlast"/></svg></a>
    </div>
    <span class="sep"></span><button><svg><use href="#export"/></svg>Exportar</button><span class="sep"></span>
    <button><svg><use href="#door"/></svg>Fechar</button><span class="sep"></span>
    <button><svg><use href="#docrec"/></svg>Financ.</button><button><svg><use href="#medal"/></svg>Vendedor</button><button><svg><use href="#checks"/></svg>Contatos</button><button><svg><use href="#fsearch"/></svg>Consulta</button><span class="sep"></span>
    <button><svg><use href="#lock"/></svg>Liberar</button><button><svg><use href="#docG"/></svg>Gerar NF</button>
    <label class="aplic"><input type="checkbox" class="cb"><span>Aplic</span></label>
  </div>

  <h1 class="banner">Pedido: 4092 Cliente: 1050-NYLON-EVIP/MG CNPJ: 00.576.786/0001-90
    <span class="month"><b>«« «</b><span>junho, 2020</span><b>» »»</b></span>
  </h1>

  <form class="form">
    <div class="row one">
      <div class="field w-ped"><label for="ped">Nº Pedido</label><input id="ped" class="ro blue" value="4092" readonly></div>
      <div class="field w-date"><label for="dt">Data pedido</label><div class="combo"><input id="dt" value="08/06/2020"><button type="button" aria-label="Calendário"><svg><use href="#cal"/></svg></button></div></div>
      <div class="field w-cli"><label for="cli">Cliente</label><div class="combo"><input id="cli" class="r" value="1050"><button type="button">···</button></div></div>
      <div class="field w-name"><input id="cname" aria-label="Nome do cliente" value="NYLON-EVIP"></div>
      <div class="field w-uf"><label for="uf">UF</label><input id="uf" class="ro" value="MG" readonly></div>
      <span class="swatch"></span>
      <div class="field w-fin"><label for="fin" class="plain">Finalidade</label><div class="selwrap"><select id="fin"><option>PEDIDO</option></select><span class="selbtn"><i></i></span></div></div>
    </div>
    <div class="row two">
      <div class="field w-ev"><label for="ev">Evento</label><div class="combo"><input id="ev" value="V1"><button type="button">···</button></div></div>
      <div class="field w-evn"><input id="evn" aria-label="Nome do evento" value="VENDA DE MERCADORIA"></div>
      <fieldset class="tipo"><legend>Tipo de preço</legend><div class="opts"><label><input type="radio" name="tp" checked disabled>A</label><label><input type="radio" name="tp" disabled>B</label></div></fieldset>
      <div class="romaneio">
        <label class="rom-head"><input type="checkbox" class="cb" checked><span><u>R</u>omaneio</span><i></i></label>
        <div class="rom-body">
          <label for="nf">NF</label><input id="nf" class="ro blue nf-in" value="000227" readonly>
          <label for="em" class="em">Emissão</label><div class="combo em-in"><input id="em" value="09/06/2020"><button type="button" aria-label="Calendário"><svg><use href="#cal"/></svg></button></div>
        </div>
      </div>
      <button type="button" class="cbtn">C</button>
    </div>
  </form>

  <nav class="tabs">
    <button class="on"><u>1</u> Item</button><button><u>2</u> Comercial</button><button><u>3</u> Resumo financeiro</button><button><u>4</u> Endereços</button><button><u>5</u> Transporte</button><button><u>6</u> Observações</button><button><u>7</u> Outros</button><button><u>8</u> Resultado</button>
  </nav>

  <div class="content">
    <section class="items">
      <div class="item-bar">
        <label for="it" class="it-label">Item(ns)</label>
        <div class="combo it-in"><input id="it"><button aria-label="Localizar"><svg><use href="#bino"/></svg></button></div>
        <button class="raised exato"><svg><use href="#tagL"/></svg><span><u>E</u>xato</span></button>
        <label class="ck estoque"><input type="checkbox" class="cb">Item(ns) com estoque</label>
        <button class="raised vinc"><svg><use href="#check"/></svg><span><u>V</u>incular</span></button>
        <label class="ck"><input type="checkbox" class="cb">Imprimir referência</label>
        <div class="pager"><span>1:1</span>
          <a class="off first" href="#" aria-label="Primeiro"><svg><use href="#nfirst"/></svg></a><a class="off" href="#" aria-label="Anterior"><svg><use href="#nprev"/></svg></a><a href="#" aria-label="Próximo"><svg><use href="#nnext"/></svg></a><a href="#" aria-label="Último"><svg><use href="#nlast"/></svg></a><a class="off" href="#" aria-label="Remover"><svg viewBox="0 0 12 12"><path d="M1 5H11V8H1Z"/></svg></a>
        </div>
      </div>
      <div class="grid">
        <table>
          <colgroup><col class="c11"><col class="c26"><col class="c59"><col class="c220"><col class="c20"><col class="c69"><col class="c70"><col class="c166"><col class="c70"><col class="c69"><col class="c90"><col class="c38"><col class="c58"><col class="c69"><col class="c70"><col class="c53"><col class="c58"><col class="c48"><col class="c30"><col class="c58"><col class="c61"><col class="c70"><col class="c70"><col></colgroup>
          <thead><tr><th></th><th>Seq.</th><th>Código</th><th>Descrição</th><th>Un.</th><th>Quantidade</th><th>Total do item</th><th>Lote estoq.</th><th>Ajuste</th><th>Preço unit.</th><th>icESTOQUEATUAL</th><th>CST IPI</th><th>Alíq.IPI</th><th>Bc.IPI</th><th>Valor IPI</th><th>NCM</th><th>Ex</th><th>CEST</th><th>CFOP</th><th>Aliq.MVA</th><th>% reduz.MVA</th><th>Bc.ST</th><th>Valor ST</th><th>Clas</th></tr></thead>
          <tbody><tr><td class="ind"><i></i></td><td class="c w">1</td><td>1544</td><td>ALCOOL GEL LUVGEL 70% 5000 ML EXCELLENC</td><td>UN</td><td class="c">24</td><td class="n">717,60</td><td>2923</td><td class="n">-35,88</td><td class="n">29,90</td><td class="n">-4490</td><td></td><td class="n">0,00%</td><td class="n">0,00</td><td class="n">0,00</td><td class="c">38089429</td><td></td><td class="n">1100100</td><td>5102</td><td class="n">0</td><td></td><td class="n">0,00</td><td class="n">0,00</td><td>4</td></tr></tbody>
        </table>
        <div class="note">
          <p class="a">Esse valor de desconto será<br>rateado entre os itens do<br>pedido no campo valor unitário</p>
          <p>Por esse motivo não fica<br>descriminado na tela da<br>impressão da NF</p>
        </div>
      </div>
    </section>
    <aside class="totals">
      <div class="tot"><label for="t1" class="b">Total Itens</label><input id="t1" class="ro" value="717,60" readonly></div>
      <div class="tot"><label for="t2">Acréscimo</label><input id="t2" value="0,00"></div>
      <div class="tot mark"><label for="t3">Desconto</label><input id="t3" value="35,88"></div>
      <div class="tot"><label for="t4">Juros</label><input id="t4" class="ro" value="" readonly></div>
      <div class="tot"><label for="t5">Total ST</label><input id="t5" class="ro" value="0,00" readonly></div>
      <div class="tot grand"><label for="t6">Total Pedido</label><input id="t6" value="681,72" readonly></div>
      <div class="tot"><label for="t7">Pontos do pedido</label><input id="t7" class="ro" value="0" readonly></div>
      <div class="tot"><label for="t8">Saldo do pedido</label><input id="t8" class="ro" value="-35,88" readonly></div>
    </aside>
  </div>
</main>
</body>
</html>
```
FILE: styles.css
```
*, *::before, *::after { box-sizing: border-box; }
body {
  margin: 0; min-height: 100vh; display: flex; flex-direction: column; background: #efefef; color: #000; overflow: hidden;
  font: 10px/14px Roboto, "Liberation Sans", Arial, sans-serif;
}
button, input, select { font: inherit; color: inherit; margin: 0; border-radius: 0; }
button { background: none; border: 0; padding: 0; }
svg { display: block; flex: none; }
.defs { position: absolute; width: 0; height: 0; }

/* remote session strip */
.strip { display: flex; align-items: center; height: 31px; background: #efefef; border-top: 2px solid #444; border-bottom: 1px solid #7c8ba0; box-shadow: inset 0 1px #a5a5a5; padding-left: 4px; }
.strip-icons { display: flex; gap: 9px; flex: 1; }
.strip-icons svg { width: 18px; height: 18px; }
.strip-check { appearance: none; width: 8px; height: 8px; border: 1px solid #aaa; background: #dedede; margin-right: 6px; }
.strip-input { width: 130px; height: 24px; border: 1px solid #0078d7; background: #fff; }
.leds { display: flex; gap: 2px; width: 34px; height: 26px; padding: 5px 0 0 6px; margin: 0 4px 0 0; border: 1px solid #7b7b7b; border-width: 1px 0 0 1px; background: #ececec; }
.led { width: 9px; height: 16px; border: 1px solid #222; }
.green { background: #0a4408; }
.red { background: #8a0505; }

/* quick access + title */
.quick, .ribbon-tabs, .ribbon { font: 11px/14px Lato, "Noto Sans", sans-serif; color: #1e3a66; }
.quick { display: flex; align-items: center; height: 29px; background: #c0d2eb; }
.q { width: 16px; height: 16px; }
.vline { width: 1px; height: 16px; background: #555; margin: 0 4px 0 5px; }
.vline.end { margin: 0 4px 0 6px; }
.quick-icons { display: flex; justify-content: space-between; width: 643px; }
.quick-icons svg { width: 16px; height: 16px; }
.q-more { width: 8px; height: 8px; margin-left: 2px; }
.app-title { margin-left: 26px; }
.win-controls { margin-left: auto; display: flex; gap: 19px; padding-right: 9px; }
.win-controls svg { width: 12px; height: 12px; }

.ribbon-tabs { position: relative; display: flex; align-items: flex-end; height: 23px; background: #bdcfe9; border-bottom: 1px solid #7391b9; }
.app-tab { width: 175px; height: 22px; margin-right: 4px; color: #fff; background: linear-gradient(#fba81c, #fb9a0c 50%, #fdb92c); border: 1px solid #d98a28; border-radius: 2px 2px 0 0; white-space: nowrap; }
.rtab { height: 22px; padding: 4px 12px 0; }
.rtab.active { background: #f3f8fe; border: 1px solid #9db7d8; border-bottom: 0; border-radius: 3px 3px 0 0; margin-bottom: -1px; height: 23px; padding: 2px 11px 0; }
.collapse { margin: 0 6px 7px auto; }
.collapse svg { width: 10px; height: 8px; }
.cursor { position: absolute; left: 520px; top: 10px; width: 12px; height: 19px; z-index: 2; }

.ribbon { display: flex; height: 90px; background: linear-gradient(#eef5ff, #dfe9f4 60%, #d7e3ef); border-bottom: 3px solid #a3b6d0; }
.group { display: flex; flex-direction: column; justify-content: space-between; border-right: 1px solid #bccbe0; box-shadow: 1px 0 #f6faff; padding: 4px 0 2px; }
.g1 { width: 161px; } .g2 { width: 132px; } .g3 { width: 208px; } .g4 { width: 76px; } .g5 { width: 95px; } .g6 { width: 78px; } .g7 { width: 55px; } .g8 { width: 107px; } .g9 { width: 118px; } .g10 { width: 75px; }
.gbody { display: flex; justify-content: center; align-items: flex-start; }
.g1 .gbody, .g3 .gbody { justify-content: flex-start; }
.big { display: flex; flex-direction: column; align-items: center; text-align: center; padding-top: 4px; flex: none; }
.big svg { width: 28px; height: 28px; margin-bottom: 6px; }
.big.narrow { width: 45px; }
.big.mid { width: 54px; }
.dd { margin-top: 4px; border: 3px solid transparent; border-top-color: #5b6470; border-bottom: 0; }
.dd.in { display: inline-block; vertical-align: middle; margin: 0; }
.smalls button { display: flex; align-items: center; gap: 2px; height: 22px; white-space: nowrap; }
.smalls svg { width: 15px; height: 15px; }
.cap { text-align: center; white-space: nowrap; }

/* document tabs */
.doc-tabs { display: flex; align-items: flex-end; height: 25px; padding-left: 4px; background: linear-gradient(#d5e5fb, #8fb2e6 80%, #8aade2); border-bottom: 2px solid #4a57a5; font: 11px/14px "DejaVu Sans Condensed", "DejaVu Sans", sans-serif; }
.dtab { height: 20px; padding: 3px 16px 0 4px; white-space: nowrap; }
.dtab.active { display: flex; align-items: center; justify-content: space-between; width: 138px; padding: 0 2px 0 3px; margin-bottom: -1px; background: linear-gradient(#fff3d2, #fdd08c); border: 1px solid #3a44a0; border-bottom: 0; }
.dtab.nf { border-right: 1px solid #8296c0; }
.xbtn { width: 13px; height: 14px; border: 1px solid #1c2b8c; background: #b9cdf3; display: flex; align-items: center; justify-content: center; }
.xbtn svg { width: 8px; height: 8px; }
.xbtn.last { margin: 0 0 4px auto; }

/* window */
.window { flex: 1; display: flex; flex-direction: column; padding: 4px 0 0 3px; border-right: 2px solid #aac4e8; }
.toolbar { display: flex; height: 32px; margin-right: 3px; background: linear-gradient(#fff, #d4d4d4); }
.toolbar button { width: 47px; display: flex; flex-direction: column; align-items: center; padding-top: 3px; white-space: nowrap; }
.toolbar button svg { width: 15px; height: 15px; }
.toolbar button:disabled { color: #8c8c8c; }
.sep { width: 1px; margin: 2px 4px; background: #9c9c9c; }
.counter { width: 53px; background: #fff; display: flex; align-items: center; justify-content: center; }
.navs { width: 78px; display: flex; align-items: center; justify-content: space-between; padding: 0 4px; background: #efefef; }
.navs svg, .pager svg { width: 12px; height: 12px; fill: #1a6fd8; }
.aplic { width: 36px; display: flex; align-items: center; gap: 4px; background: #efefef; }
.cb { appearance: none; flex: none; width: 11px; height: 11px; background: #fff; border: 1px solid #777; border-right-color: #ddd; border-bottom-color: #ddd; }
.cb:checked { position: relative; }
.cb:checked::after { content: ""; position: absolute; left: 3px; top: 0; width: 4px; height: 8px; border: solid #000; border-width: 0 2px 2px 0; transform: rotate(40deg); }
.banner { position: relative; margin: 0 3px 0 0; height: 47px; padding-left: 61px; background: #808080; color: #fff; font: 17px/47px Roboto, "Liberation Sans", sans-serif; }
.month { position: absolute; left: 229px; bottom: 0; width: 170px; height: 4px; overflow: hidden; display: flex; justify-content: space-between; color: #111; font-size: 12px; line-height: 8px; }
.month b { background: #efefef; }

.form { padding: 0 4px 1px 7px; }
.row { display: flex; align-items: flex-end; }
.one { height: 33px; }
.two { height: 39px; }
.two .field, .two .tipo { margin-bottom: 2px; }
.field { display: flex; flex-direction: column; }
.field label { font: bold 11px/14px "Liberation Sans", Arial, sans-serif; white-space: nowrap; }
.one .field label { padding-bottom: 2px; }
.one .field .plain { font: inherit; padding: 0; }
.form input:not([type]), .form select, .combo, .it-in, .tot input { border: 1px solid #777; border-right-color: #fff; border-bottom-color: #fff; box-shadow: inset 1px 1px #a8a8a8; background: #fff; padding: 0 2px; height: 18px; width: 100%; min-width: 0; outline: 0; }
.form input.ro, .tot input.ro { background: #efefef; }
.form .combo { display: flex; padding: 0; flex: none; }
.form .combo input:not([type]), .it-in input { flex: 1; border: 0; height: 16px; background: transparent; box-shadow: none; min-width: 0; }
.combo button { flex: none; width: 19px; background: #efefef; border: 1px solid #fff; border-right-color: #777; border-bottom-color: #777; display: flex; align-items: center; justify-content: center; font-weight: bold; }
.combo button svg { width: 12px; height: 12px; }
.form .blue { color: #0000e6; font-weight: bold; text-align: center; font-size: 12px; }
.r { text-align: right; }
.w-ped { width: 79px; margin-right: 7px; }
.w-date { width: 81px; margin-right: 6px; }
.w-cli { width: 62px; margin-right: 3px; }
.w-name { width: 238px; margin-right: 7px; }
.w-uf { width: 29px; margin-right: 7px; }
.swatch { width: 13px; height: 13px; margin: 0 59px 4px 0; background: #ff7f40; }
.w-fin { width: 81px; }
.selwrap { position: relative; }
.form select { appearance: none; display: block; }
.selbtn { position: absolute; right: 1px; top: 1px; width: 15px; height: 16px; background: #efefef; border: 1px solid #fff; border-right-color: #777; border-bottom-color: #777; display: flex; align-items: center; justify-content: center; pointer-events: none; }
.selbtn i { border: 4px solid transparent; border-top-color: #000; border-bottom: 0; }
.w-ev { width: 62px; margin-right: 3px; }
.w-evn { width: 246px; margin-right: 6px; }
.tipo { width: 80px; height: 30px; margin: 0 6px 0 0; padding: 0 0 0 7px; border: 1px solid #b4b4b4; color: #999; }
.tipo legend { color: #222; padding: 0 1px; margin-left: -2px; line-height: 12px; white-space: nowrap; }
.opts { display: flex; gap: 11px; }
.tipo label { display: flex; align-items: center; gap: 6px; line-height: 12px; }
.tipo input { width: 11px; height: 11px; }
.romaneio { width: 246px; height: 36px; background: #9c9ca0; padding: 1px 5px 0 8px; margin-right: 5px; border-left: 1px solid #6e6e72; }
.rom-head { display: flex; align-items: center; gap: 5px; height: 13px; }
.rom-head i { flex: 1; height: 1px; background: #d5d5d5; }
.rom-body { display: flex; align-items: center; padding-left: 4px; height: 20px; }
.form input.nf-in { flex: none; width: 65px; margin: 0 auto 0 5px; }
.em { margin-right: 3px; }
.form .em-in { width: 81px; }
.cbtn { width: 23px; height: 30px; background: #efefef; border: 1px solid #fff; border-right: 2px solid #777; border-bottom: 2px solid #777; font-weight: bold; }

.tabs { display: flex; align-items: flex-end; height: 20px; margin-right: 3px; background: #fff; border-bottom: 1px solid #dcdcdc; padding-left: 2px; }
.tabs button { height: 16px; padding: 0 3px; border-right: 2px solid #777; margin-right: 1px; background: #f5f5f5; white-space: nowrap; margin-bottom: 1px; }
.tabs .on { height: 18px; padding: 0 4px; background: #fafafa; }

.content { flex: 1; display: flex; margin-right: 2px; padding: 3px 0 0 5px; background: #fff; border-right: 3px double #777; }
.items { flex: 1; min-width: 0; display: flex; flex-direction: column; background: #efefef; padding-left: 6px; }
.item-bar { display: flex; align-items: center; height: 30px; padding-top: 2px; }
.it-label { color: #0000e6; font: bold 11px/14px "Liberation Sans", Arial, sans-serif; width: 51px; white-space: nowrap; }
.it-in { display: flex; width: 160px; padding: 0; margin-right: 5px; }
.raised { display: flex; align-items: center; justify-content: center; gap: 4px; height: 19px; border: 1px solid #fff; border-right: 2px solid #777; border-bottom: 2px solid #777; background: #efefef; }
.raised svg { width: 15px; height: 15px; }
.exato { width: 53px; margin-right: 8px; }
.vinc { width: 62px; margin-right: 5px; }
.ck { display: flex; align-items: center; gap: 5px; white-space: nowrap; }
.estoque { width: 118px; }
.pager { margin-left: auto; display: flex; align-items: center; gap: 12px; padding-right: 17px; }
.pager .first { margin-left: 48px; }
.pager .off svg { fill: #9a9a9a; }
.grid { position: relative; flex: 1; background: #fff; border: 1px solid #666; border-width: 1px 0 0 1px; margin-right: 7px; }
table { width: 100%; table-layout: fixed; border-collapse: separate; border-spacing: 0; }
.c11 { width: 11px; } .c20 { width: 20px; } .c26 { width: 26px; } .c30 { width: 30px; } .c38 { width: 38px; } .c48 { width: 48px; } .c53 { width: 53px; } .c58 { width: 58px; } .c59 { width: 59px; } .c61 { width: 61px; } .c69 { width: 69px; } .c70 { width: 70px; } .c90 { width: 90px; } .c166 { width: 166px; } .c220 { width: 220px; }
th, td { height: 16px; padding: 0 2px; line-height: 15px; white-space: nowrap; overflow: hidden; text-align: left; font-weight: normal; }
th { background: #efefef; border-right: 1px solid #222; border-bottom: 1px solid #222; padding-left: 3px; padding-right: 0; }
td { background: #d9e6f4; border-right: 1px solid #bbb; border-bottom: 1px solid #bbb; }
td.n { text-align: right; }
td.c { text-align: center; }
td.w { background: #fff; }
td.ind { background: #efefef; }
.ind i { display: block; width: 0; border: 5px solid transparent; border-left-color: #000; border-right: 0; }
.note { position: absolute; right: 0; top: 54px; width: 281px; color: #ed1c24; font: 20px/23px "Liberation Sans", Arial, sans-serif; white-space: nowrap; }
.note p { margin: 0; }
.note .a { margin: 0 0 7px 7px; }

.totals { width: 124px; border-left: 2px solid #808080; background: #efefef; padding: 3px 7px 0; }
.tot { position: relative; }
.tot label { display: block; line-height: 18px; }
.tot input { display: block; text-align: right; }
.tot .b { font: bold 11px/18px "Liberation Sans", Arial, sans-serif; }
.grand label { font: bold 13px/24px "Liberation Sans", Arial, sans-serif; margin-top: 2px; }
.grand input { height: 24px; background: #80ffff; font: 16px/20px "Liberation Sans", Arial, sans-serif; }
.mark::after { content: ""; position: absolute; z-index: 1; left: -9px; right: -10px; top: -2px; height: 45px; border: 5px solid #ed1c24; pointer-events: none; }
```
